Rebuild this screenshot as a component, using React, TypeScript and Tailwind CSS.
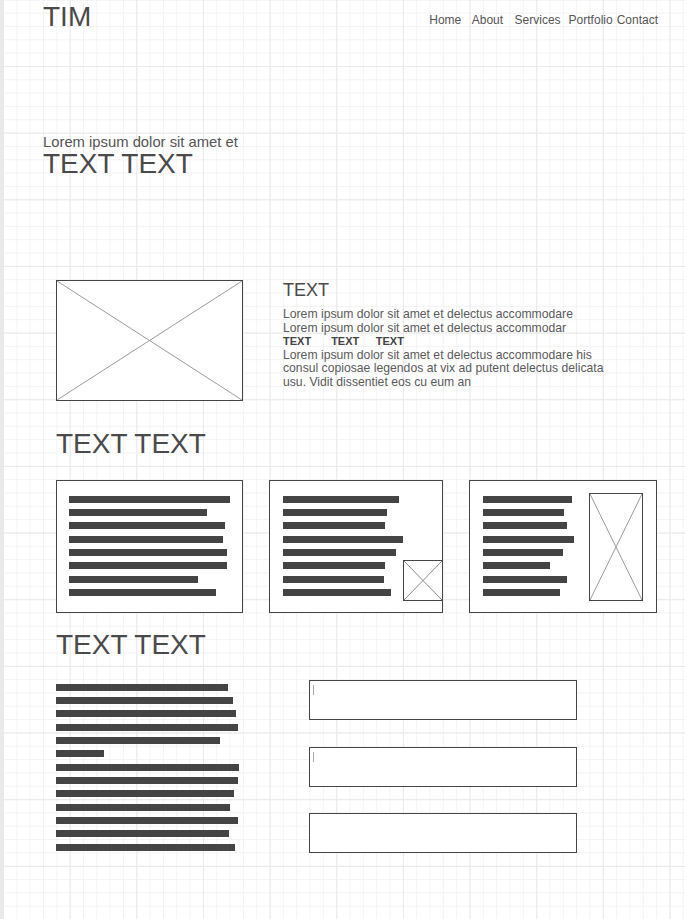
import React from 'react';

const font = "font-['Liberation_Sans',Arial,sans-serif]";

const Crossed: React.FC<{ className?: string; stroke?: string }> = ({ className, stroke = '#9a9a9a' }) => (
  <div className={`bg-white border border-[#454545] ${className ?? ''}`}>
    <svg className="block w-full h-full" viewBox="0 0 100 100" preserveAspectRatio="none">
      <line x1="0" y1="0" x2="100" y2="100" stroke={stroke} strokeWidth="1" vectorEffect="non-scaling-stroke" />
      <line x1="100" y1="0" x2="0" y2="100" stroke={stroke} strokeWidth="1" vectorEffect="non-scaling-stroke" />
    </svg>
  </div>
);

const Bars: React.FC<{ widths: number[] }> = ({ widths }) => (
  <div className="flex flex-col gap-[6.33px]">
    {widths.map((w, i) => (
      <div key={i} className="h-[7px] bg-[#444444]" style={{ width: w }} />
    ))}
  </div>
);

const Field: React.FC<{ cursor?: boolean }> = ({ cursor }) => (
  <div className="w-[268px] h-[40px] bg-white border border-[#454545] pl-[3px] pt-[4px]">
    {cursor && <div className="w-px h-[10px] bg-[#aaaaaa]" />}
  </div>
);

export default function App() {
  return (
    <div
      className={`${font} w-full h-[919px] overflow-hidden border-l-[3px] border-[#e9e9e9] text-[#4a4a4a] bg-white
        bg-[linear-gradient(to_right,#e9e9e9_1px,transparent_1px),linear-gradient(to_bottom,#e9e9e9_1px,transparent_1px),linear-gradient(to_right,#f3f3f3_1px,transparent_1px),linear-gradient(to_bottom,#f3f3f3_1px,transparent_1px)]
        bg-[size:66.667px_66.667px,66.667px_66.667px,13.333px_13.333px,13.333px_13.333px] bg-[position:0px_-0.67px]`}
    >
      {/* header */}
      <header className="flex justify-between items-start pl-[40px] pr-[27px]">
        <div className="mt-[3px] text-[28px] leading-none">TIM</div>
        <nav className="mt-[14px] flex text-[12px] leading-none text-[#555555]">
          <span className="mr-[10.5px]">Home</span>
          <span className="mr-[11.5px]">About</span>
          <span className="mr-[8px]">Services</span>
          <span className="mr-[4px]">Portfolio</span>
          <span>Contact</span>
        </nav>
      </header>

      {/* hero */}
      <section className="pl-[40px] mt-[103.5px]">
        <p className="text-[14.8px] leading-none text-[#555555]">Lorem ipsum dolor sit amet et</p>
        <h1 className="mt-px text-[28px] leading-none">TEXT TEXT</h1>
      </section>

      {/* feature */}
      <section className="pl-[53px] mt-[101.5px] flex gap-[40px]">
        <Crossed className="w-[187px] h-[121px] shrink-0" />
        <div className="pt-[1.5px] w-[340px]">
          <h2 className="text-[18px] leading-none">TEXT</h2>
          <div className="mt-[8.7px] text-[12.2px] leading-[13.6px] text-[#5a5a5a]">
            <p>Lorem ipsum dolor sit amet et delectus accommodare</p>
            <p>Lorem ipsum dolor sit amet et delectus accommodar</p>
            <p className="font-bold text-[11px] text-[#444444]">
              <span className="mr-[20px]">TEXT</span>
              <span className="mr-[16.5px]">TEXT</span>
              <span>TEXT</span>
            </p>
            <p>
              Lorem ipsum dolor sit amet et delectus accommodare his
              <br />
              consul copiosae legendos at vix ad putent delectus delicata
              <br />
              usu. Vidit dissentiet eos cu eum an
            </p>
          </div>
        </div>
      </section>

      {/* cards */}
      <section className="pl-[53px] mt-[29.6px]">
        <h2 className="text-[28px] leading-none">TEXT TEXT</h2>
        <div className="mt-[21.4px] flex gap-[26px]">
          <div className="w-[187px] h-[133px] bg-white border border-[#454545] pl-[12px] pt-[15px]">
            <Bars widths={[161, 138, 156, 154, 158, 158, 129, 147]} />
          </div>
          <div className="w-[174px] h-[133px] bg-white border border-[#454545] pl-[13px] pt-[15px] flex">
            <Bars widths={[116, 104, 102, 120, 113, 102, 101, 108]} />
            <Crossed className="ml-auto -mr-px self-end mb-[11px] w-[40px] h-[41px] shrink-0" stroke="#8a8a8a" />
          </div>
          <div className="w-[188px] h-[133px] bg-white border border-[#454545] pl-[13px] pt-[15px] flex">
            <Bars widths={[89, 81, 84, 91, 80, 67, 84, 77]} />
            <Crossed className="ml-auto mr-[13px] -mt-[3px] w-[54px] h-[108px] shrink-0" />
          </div>
        </div>
      </section>

      {/* form */}
      <section className="pl-[53px] mt-[17.8px]">
        <h2 className="text-[28px] leading-none">TEXT TEXT</h2>
        <div className="mt-[21.9px] flex gap-[70px]">
          <div className="w-[183px] pt-[3.3px]">
            <Bars widths={[172, 177, 180, 182, 164, 48, 183, 182, 178, 174, 182, 173, 179]} />
          </div>
          <div className="flex flex-col gap-[26.5px]">
            <Field cursor />
            <Field cursor />
            <Field />
          </div>
        </div>
      </section>
    </div>
  );
}
